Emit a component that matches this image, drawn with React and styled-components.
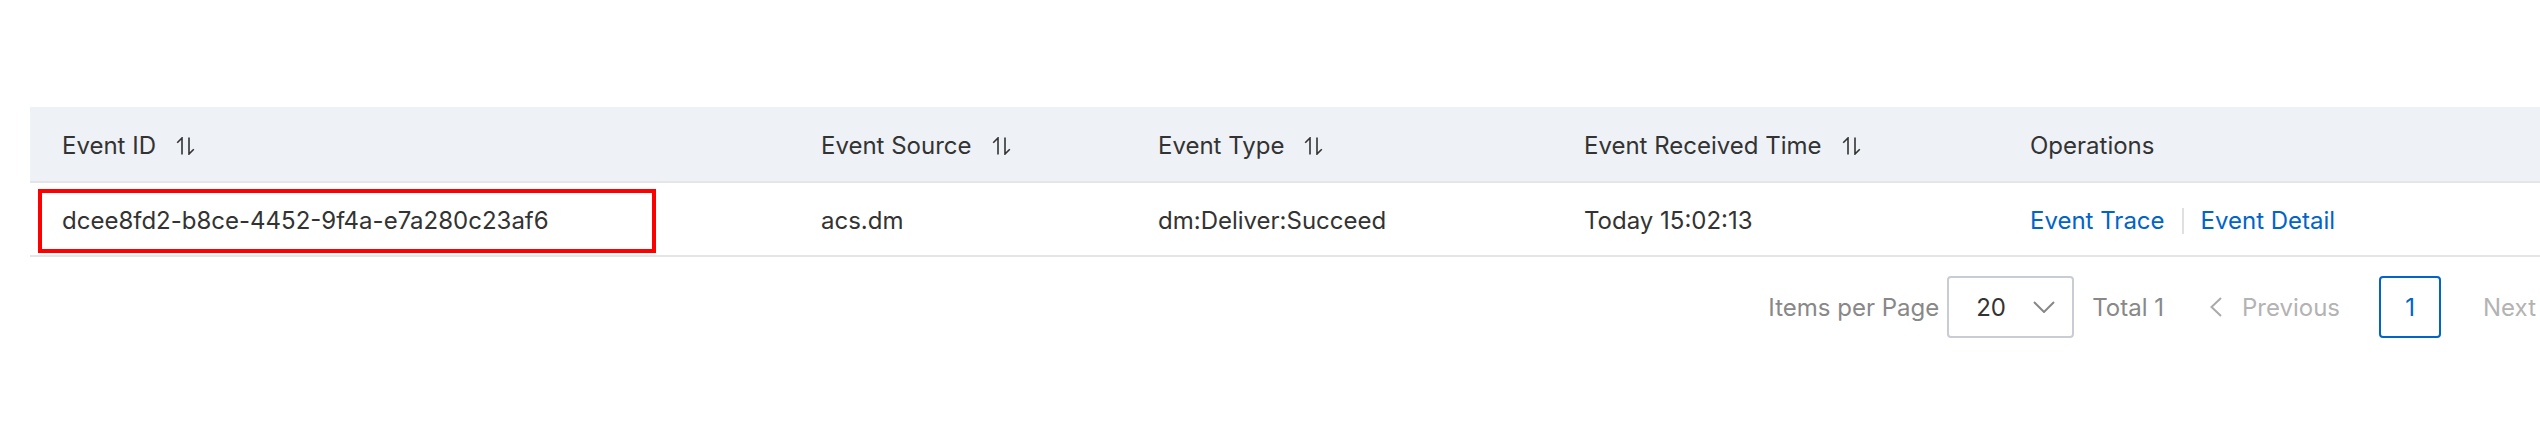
import React from "react";
import styled, { createGlobalStyle } from "styled-components";

const GlobalStyle = createGlobalStyle`
  html, body {
    margin: 0;
    padding: 0;
    background: #fff;
    overflow: hidden;
  }
  body {
    font-family: Inter, "Liberation Sans", Arial, sans-serif;
    color: #333;
  }
`;

const Page = styled.div`
  width: 2600px;
  padding: 107px 0 0 30px;
`;

const COLS = "759px 337px 426px 446px 1fr";

const HeaderRow = styled.div`
  display: grid;
  grid-template-columns: ${COLS};
  height: 74px;
  background: #eef1f6;
  border-bottom: 2px solid #e3e5e9;
`;

const BodyRow = styled.div`
  position: relative;
  display: grid;
  grid-template-columns: ${COLS};
  height: 72px;
  border-bottom: 2px solid #e5e5e5;
`;

const Cell = styled.div`
  display: flex;
  align-items: center;
  padding: 3px 0 0 32px;
  font-size: 24px;
  color: #333;
  white-space: nowrap;
`;

const SortIcon = styled.svg`
  width: 19px;
  height: 18px;
  margin-left: 20px;
  flex-shrink: 0;
`;

const Highlight = styled.div`
  position: absolute;
  left: 8px;
  top: 6px;
  width: 610px;
  height: 56px;
  border: 4px solid #ff0000;
  pointer-events: none;
`;

const Link = styled.a`
  color: #0064c8;
  text-decoration: none;
  cursor: pointer;
`;

const Divider = styled.span`
  display: inline-block;
  width: 2px;
  height: 26px;
  margin: 0 17px;
  background: #e0e0e0;
`;

const Pagination = styled.div`
  display: flex;
  align-items: center;
  justify-content: flex-end;
  padding-right: 59px;
  margin-top: 19px;
  height: 62px;
  font-size: 24px;
`;

const Label = styled.span`
  color: ${(p) => p.color || "#888"};
  margin-right: ${(p) => p.mr || 0}px;
  white-space: nowrap;
`;

const Select = styled.div`
  box-sizing: border-box;
  display: flex;
  align-items: center;
  justify-content: space-between;
  width: 127px;
  height: 62px;
  padding: 0 17px 0 27px;
  margin-right: 18px;
  border: 2px solid #c9ccd2;
  border-radius: 4px;
  color: #333;
`;

const NavButton = styled.div`
  display: flex;
  align-items: center;
  gap: ${(p) => p.gap || 23}px;
  color: #b3b3b3;
  margin-right: ${(p) => p.mr || 0}px;
`;

const PageButton = styled.div`
  box-sizing: border-box;
  display: flex;
  align-items: center;
  justify-content: center;
  width: 62px;
  height: 62px;
  margin-right: 42px;
  border: 2px solid ${(p) => (p.active ? "#0064c8" : "#c9ccd2")};
  border-radius: 4px;
  color: ${(p) => (p.active ? "#0064c8" : "#333")};
`;

const Sort = () => (
  <SortIcon viewBox="0 0 19 18" fill="none" stroke="#333" strokeWidth="1.6">
    <path d="M6 17.5V1L1.2 5.8" />
    <path d="M13 0.5V17L17.8 12.2" />
  </SortIcon>
);

const columns = [
  { title: "Event ID", sort: true },
  { title: "Event Source", sort: true },
  { title: "Event Type", sort: true },
  { title: "Event Received Time", sort: true },
  { title: "Operations", sort: false },
];

const row = {
  id: "dcee8fd2-b8ce-4452-9f4a-e7a280c23af6",
  source: "acs.dm",
  type: "dm:Deliver:Succeed",
  time: "Today 15:02:13",
};

export default function App() {
  return (
    <Page>
      <GlobalStyle />
      <HeaderRow>
        {columns.map((c) => (
          <Cell key={c.title}>
            {c.title}
            {c.sort && <Sort />}
          </Cell>
        ))}
      </HeaderRow>
      <BodyRow>
        <Cell>{row.id}</Cell>
        <Cell>{row.source}</Cell>
        <Cell>{row.type}</Cell>
        <Cell>{row.time}</Cell>
        <Cell>
          <Link>Event Trace</Link>
          <Divider />
          <Link>Event Detail</Link>
        </Cell>
        <Highlight />
      </BodyRow>
      <Pagination>
        <Label mr={8}>Items per Page</Label>
        <Select>
          <span>20</span>
          <svg width="22" height="12" viewBox="0 0 22 12" fill="none" stroke="#888" strokeWidth="2">
            <polyline points="1,1 11,11 21,1" />
          </svg>
        </Select>
        <Label mr={46}>Total 1</Label>
        <NavButton mr={39} gap={20}>
          <svg width="12" height="20" viewBox="0 0 12 20" fill="none" stroke="#aaa" strokeWidth="2">
            <polyline points="11,1 1.5,10 11,19" />
          </svg>
          <span>Previous</span>
        </NavButton>
        <PageButton active>1</PageButton>
        <NavButton>
          <span>Next</span>
          <svg width="12" height="20" viewBox="0 0 12 20" fill="none" stroke="#aaa" strokeWidth="2">
            <polyline points="1,1 10.5,10 1,19" />
          </svg>
        </NavButton>
      </Pagination>
    </Page>
  );
}
